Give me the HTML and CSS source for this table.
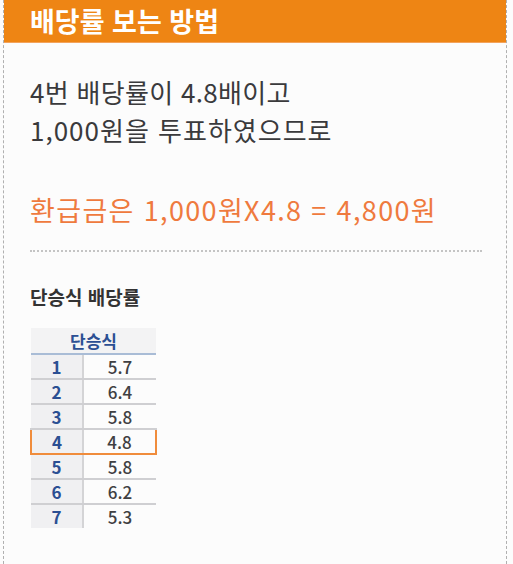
FILE: index.html
```html
<!DOCTYPE html>
<html lang="ko">
<head>
<meta charset="utf-8">
<link rel="stylesheet" href="styles.css">
</head>
<body>
<div class="panel">
  <div class="head">배당률 보는 방법</div>
  <div class="content">
    <p class="desc"><span class="l1">4번 배당률이 4.8배이고</span><br><span class="l2">1,000원을 투표하였으므로</span></p>
    <p class="result">환급금은 1,000원X4.8 = 4,800원</p>
    <div class="dots"></div>
    <h3 class="sub">단승식 배당률</h3>
    <table class="odds">
      <thead><tr><th colspan="2">단승식</th></tr></thead>
      <tbody>
        <tr><td class="no">1</td><td class="val">5.7</td></tr>
        <tr><td class="no">2</td><td class="val">6.4</td></tr>
        <tr><td class="no">3</td><td class="val">5.8</td></tr>
        <tr class="hl"><td class="no">4</td><td class="val">4.8</td></tr>
        <tr><td class="no">5</td><td class="val">5.8</td></tr>
        <tr><td class="no">6</td><td class="val">6.2</td></tr>
        <tr class="last"><td class="no">7</td><td class="val">5.3</td></tr>
      </tbody>
    </table>
  </div>
</div>
</body>
</html>
```
FILE: styles.css
```css
html, body { margin: 0; padding: 0; background: #fcfcfc; }
body { font-family: "Noto Sans", "Noto Sans CJK KR", sans-serif; }
.panel {
  margin-left: 3px;
  width: 504px;
  height: 564px;
  box-sizing: border-box;
  border-left: 1px dashed #b0b0b0;
  border-right: 1px dashed #b0b0b0;
}
.head {
  height: 42px;
  background: #ee8514;
  border-bottom: 1px solid #f3a35c;
  color: #fff;
  font-family: "Noto Sans CJK KR", sans-serif;
  font-weight: 700;
  font-size: 27px;
  line-height: 42px;
  padding-left: 26px;
  box-sizing: content-box;
}
.content { padding: 0 0 0 26px; }
.desc {
  margin: 30px 0 0 0;
  font-family: "Noto Sans CJK KR", sans-serif;
  font-size: 26px;
  line-height: 38px;
  color: #3a3a3c;
}
.desc .l1 { letter-spacing: 0.3px; }
.desc .l2 { letter-spacing: 1px; }
.result {
  margin: 45px 0 0 0;
  font-family: "Noto Sans CJK KR", sans-serif;
  font-size: 27px;
  line-height: 32px;
  color: #ef7a3e;
  letter-spacing: 1.35px;
}
.dots {
  margin-top: 24px;
  width: 452px;
  border-top: 2px dotted #c4c4c4;
}
.sub {
  margin: 33px 0 0 0;
  font-family: "Noto Sans CJK KR", sans-serif;
  font-size: 19px;
  font-weight: 700;
  line-height: 24px;
  color: #333;
}
.odds {
  margin-top: 19px;
  border-collapse: collapse;
  width: 127px;
  font-family: "Noto Sans CJK KR", sans-serif;
}
.odds th {
  background: #f3f3f4;
  color: #2b4f93;
  font-size: 17px;
  font-weight: 700;
  height: 23px;
  padding: 0;
  border-bottom: 2px solid #a9bcd6;
}
.odds td {
  height: 23px;
  padding: 0;
  text-align: center;
  border-bottom: 2px solid #cfcfd2;
  font-size: 17px;
  line-height: 23px;
}
.odds td.no {
  width: 50px;
  background: #f0f0f2;
  color: #2b4f93;
  font-weight: 700;
  border-right: 2px solid #d4d4d6;
}
.odds td.val { color: #404042; font-weight: 500; }
.odds tr.hl td {
  border-top: 2px solid #f08c3c;
  border-bottom: 2px solid #f08c3c;
}
.odds tr.hl td.no { border-left: 2px solid #f08c3c; }
.odds tr.hl td.val { border-right: 2px solid #f08c3c; }
.odds tr.last td { border-bottom: none; }
```
